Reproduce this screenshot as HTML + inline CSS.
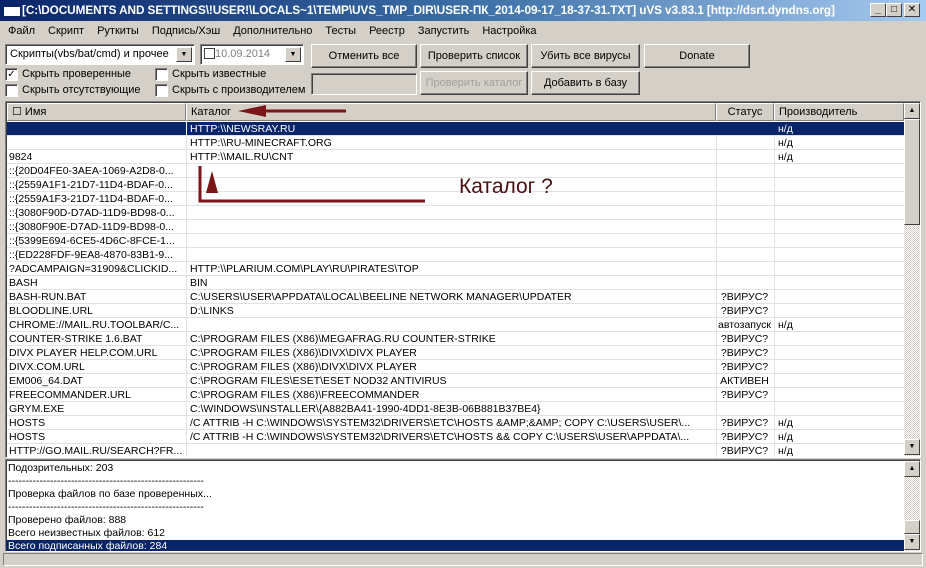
<!DOCTYPE html>
<html><head><meta charset="utf-8">
<style>
*{margin:0;padding:0;box-sizing:border-box}
body{width:926px;height:568px;background:#d4d0c8;font-family:"Liberation Sans","DejaVu Sans",sans-serif;font-size:11px;color:#000;position:relative;overflow:hidden}
.a{position:absolute}
.title{left:0;top:0;width:926px;height:21px;background:linear-gradient(90deg,#0a246a,#3a6ea5 50%,#a6caf0);color:#fff;font-weight:bold;font-size:11.8px;line-height:21px;padding-left:22px;white-space:nowrap;letter-spacing:-0.1px}
.tb{top:3px;width:16px;height:14px;background:#d4d0c8;border:1px solid;border-color:#fff #404040 #404040 #fff;color:#000;font-size:10px;line-height:12px;text-align:center;font-weight:bold}
.menu span{margin-right:13px}
.btn{height:24px;border:1px solid;border-color:#fff #404040 #404040 #fff;box-shadow:inset -1px -1px #808080;text-align:center;line-height:22px;background:#d4d0c8}
.combo{height:21px;background:#fff;border:1px solid;border-color:#808080 #fff #fff #808080;box-shadow:inset 1px 1px #404040;line-height:19px;padding-left:4px;white-space:nowrap;overflow:hidden}
.dd{position:absolute;right:2px;top:2px;width:16px;height:15px;background:#d4d0c8;border:1px solid;border-color:#fff #404040 #404040 #fff;font-size:7px;line-height:13px;text-align:center}
.cb{width:13px;height:13px;background:#fff;border:1px solid;border-color:#808080 #fff #fff #808080;box-shadow:inset 1px 1px #404040;font-size:10px;line-height:11px;text-align:center}
.list{left:5px;top:101px;width:916px;height:357px;background:#fff;border:1px solid;border-color:#808080 #fff #fff #808080;box-shadow:inset 1px 1px #404040;overflow:hidden}
.hdr{position:absolute;top:1px;height:18px;background:#d4d0c8;border:1px solid;border-color:#fff #808080 #808080 #fff;line-height:16px;padding-left:4px;white-space:nowrap}
.row{position:absolute;left:1px;width:897px;height:14px;border-bottom:1px solid #e2e2e2;line-height:14px;white-space:nowrap;font-size:10.5px}
.row span{position:absolute;top:0;overflow:hidden}
.c1{left:2px;width:176px}.c2{left:183px;width:525px}.c3{left:709px;width:57px;text-align:center}.c4{left:771px}
.vl{position:absolute;top:20px;width:1px;height:337px;background:#e2e2e2}
.sel{background:#0a246a;color:#fff}
.sb{position:absolute;width:16px;background:repeating-conic-gradient(#d4d0c8 0 25%,#fff 0 50%) 0 0/2px 2px}
.sbb{position:absolute;width:16px;height:16px;background:#d4d0c8;border:1px solid;border-color:#fff #404040 #404040 #fff;font-size:7px;line-height:14px;text-align:center}
.log{left:5px;top:459px;width:916px;height:93px;background:#fff;border:1px solid;border-color:#808080 #fff #fff #808080;box-shadow:inset 1px 1px #404040;overflow:hidden;font-size:10.5px}
.log div{height:13px;line-height:13px;padding-left:2px;white-space:nowrap}
</style></head><body>
<div class="a title">[C:\DOCUMENTS AND SETTINGS\!USER!\LOCALS~1\TEMP\UVS_TMP_DIR\USER-ПК_2014-09-17_18-37-31.TXT] uVS v3.83.1 [http://dsrt.dyndns.org]</div>
<div class="a" style="left:4px;top:4px;width:16px;height:12px;background:#fff;border-top:3px solid #0a246a"></div>
<div class="a tb" style="left:870px">_</div>
<div class="a tb" style="left:886px">□</div>
<div class="a tb" style="left:904px">✕</div>
<div class="a menu" style="left:8px;top:25px;white-space:nowrap"><span>Файл</span><span>Скрипт</span><span>Руткиты</span><span>Подпись/Хэш</span><span>Дополнительно</span><span>Тесты</span><span>Реестр</span><span>Запустить</span><span>Настройка</span></div>
<div class="a combo" style="left:5px;top:44px;width:190px">Скрипты(vbs/bat/cmd) и прочее<div class="dd">▼</div></div>
<div class="a combo" style="left:200px;top:44px;width:104px;color:#808080;padding-left:3px"><span style="display:inline-block;width:11px;height:11px;border:1px solid #404040;vertical-align:-2px"></span>10.09.2014<div class="dd" style="color:#000">▼</div></div>
<div class="a btn" style="left:311px;top:44px;width:106px">Отменить все</div>
<div class="a btn" style="left:420px;top:44px;width:108px">Проверить список</div>
<div class="a btn" style="left:531px;top:44px;width:109px">Убить все вирусы</div>
<div class="a btn" style="left:644px;top:44px;width:106px">Donate</div>
<div class="a combo" style="left:311px;top:73px;width:106px;height:22px;background:#d4d0c8"></div>
<div class="a btn" style="left:420px;top:71px;width:108px;color:#a0a0a0">Проверить каталог</div>
<div class="a btn" style="left:531px;top:71px;width:109px">Добавить в базу</div>
<div class="a cb" style="left:5px;top:68px">✓</div><div class="a" style="left:22px;top:68px">Скрыть проверенные</div>
<div class="a cb" style="left:155px;top:68px"></div><div class="a" style="left:172px;top:68px">Скрыть известные</div>
<div class="a cb" style="left:5px;top:84px"></div><div class="a" style="left:22px;top:84px">Скрыть отсутствующие</div>
<div class="a cb" style="left:155px;top:84px"></div><div class="a" style="left:172px;top:84px">Скрыть с производителем</div>
<div class="a list">
<div class="hdr" style="left:1px;width:179px">☐ Имя</div>
<div class="hdr" style="left:180px;width:530px">Каталог</div>
<div class="hdr" style="left:710px;width:58px;text-align:center;padding:0">Статус</div>
<div class="hdr" style="left:768px;width:130px">Производитель</div>
<div class="vl" style="left:180px"></div><div class="vl" style="left:710px"></div><div class="vl" style="left:768px"></div>
<div class="row sel" style="top:20px"><span class="c1"></span><span class="c2" style="border-left:1px solid #fff;padding-left:3px;left:179px">HTTP:\\NEWSRAY.RU</span><span class="c4">н/д</span></div>
<div class="row" style="top:34px"><span class="c2">HTTP:\\RU-MINECRAFT.ORG</span><span class="c4">н/д</span></div>
<div class="row" style="top:48px"><span class="c1">9824</span><span class="c2">HTTP:\\MAIL.RU\CNT</span><span class="c4">н/д</span></div>
<div class="row" style="top:62px"><span class="c1">::{20D04FE0-3AEA-1069-A2D8-0...</span></div>
<div class="row" style="top:76px"><span class="c1">::{2559A1F1-21D7-11D4-BDAF-0...</span></div>
<div class="row" style="top:90px"><span class="c1">::{2559A1F3-21D7-11D4-BDAF-0...</span></div>
<div class="row" style="top:104px"><span class="c1">::{3080F90D-D7AD-11D9-BD98-0...</span></div>
<div class="row" style="top:118px"><span class="c1">::{3080F90E-D7AD-11D9-BD98-0...</span></div>
<div class="row" style="top:132px"><span class="c1">::{5399E694-6CE5-4D6C-8FCE-1...</span></div>
<div class="row" style="top:146px"><span class="c1">::{ED228FDF-9EA8-4870-83B1-9...</span></div>
<div class="row" style="top:160px"><span class="c1">?ADCAMPAIGN=31909&amp;CLICKID...</span><span class="c2">HTTP:\\PLARIUM.COM\PLAY\RU\PIRATES\TOP</span></div>
<div class="row" style="top:174px"><span class="c1">BASH</span><span class="c2">BIN</span></div>
<div class="row" style="top:188px"><span class="c1">BASH-RUN.BAT</span><span class="c2">C:\USERS\USER\APPDATA\LOCAL\BEELINE NETWORK MANAGER\UPDATER</span><span class="c3">?ВИРУС?</span></div>
<div class="row" style="top:202px"><span class="c1">BLOODLINE.URL</span><span class="c2">D:\LINKS</span><span class="c3">?ВИРУС?</span></div>
<div class="row" style="top:216px"><span class="c1">CHROME://MAIL.RU.TOOLBAR/C...</span><span class="c3">автозапуск</span><span class="c4">н/д</span></div>
<div class="row" style="top:230px"><span class="c1">COUNTER-STRIKE 1.6.BAT</span><span class="c2">C:\PROGRAM FILES (X86)\MEGAFRAG.RU COUNTER-STRIKE</span><span class="c3">?ВИРУС?</span></div>
<div class="row" style="top:244px"><span class="c1">DIVX PLAYER HELP.COM.URL</span><span class="c2">C:\PROGRAM FILES (X86)\DIVX\DIVX PLAYER</span><span class="c3">?ВИРУС?</span></div>
<div class="row" style="top:258px"><span class="c1">DIVX.COM.URL</span><span class="c2">C:\PROGRAM FILES (X86)\DIVX\DIVX PLAYER</span><span class="c3">?ВИРУС?</span></div>
<div class="row" style="top:272px"><span class="c1">EM006_64.DAT</span><span class="c2">C:\PROGRAM FILES\ESET\ESET NOD32 ANTIVIRUS</span><span class="c3">АКТИВЕН</span></div>
<div class="row" style="top:286px"><span class="c1">FREECOMMANDER.URL</span><span class="c2">C:\PROGRAM FILES (X86)\FREECOMMANDER</span><span class="c3">?ВИРУС?</span></div>
<div class="row" style="top:300px"><span class="c1">GRYM.EXE</span><span class="c2">C:\WINDOWS\INSTALLER\{A882BA41-1990-4DD1-8E3B-06B881B37BE4}</span></div>
<div class="row" style="top:314px"><span class="c1">HOSTS</span><span class="c2">/C ATTRIB -H C:\WINDOWS\SYSTEM32\DRIVERS\ETC\HOSTS &amp;AMP;&amp;AMP; COPY C:\USERS\USER\...</span><span class="c3">?ВИРУС?</span><span class="c4">н/д</span></div>
<div class="row" style="top:328px"><span class="c1">HOSTS</span><span class="c2">/C ATTRIB -H C:\WINDOWS\SYSTEM32\DRIVERS\ETC\HOSTS &amp;&amp; COPY C:\USERS\USER\APPDATA\...</span><span class="c3">?ВИРУС?</span><span class="c4">н/д</span></div>
<div class="row" style="top:342px"><span class="c1">HTTP://GO.MAIL.RU/SEARCH?FR...</span><span class="c3">?ВИРУС?</span><span class="c4">н/д</span></div>
<div class="sb" style="left:898px;top:1px;height:353px"></div>
<div class="sbb" style="left:898px;top:1px">▲</div>
<div class="sbb" style="left:898px;top:17px;height:106px"></div>
<div class="sbb" style="left:898px;top:337px">▼</div>
</div>
<div class="a log">
<div style="margin-top:2px">Подозрительных: 203</div>
<div>--------------------------------------------------------</div>
<div>Проверка файлов по базе проверенных...</div>
<div>--------------------------------------------------------</div>
<div>Проверено файлов: 888</div>
<div>Всего неизвестных файлов: 612</div>
<div class="sel" style="width:898px">Всего подписанных файлов: 284</div>
<div class="sb" style="left:898px;top:1px;height:90px;position:absolute;padding:0"></div>
<div class="sbb" style="left:898px;top:1px;position:absolute;padding:0;height:16px">▲</div>
<div class="sbb" style="left:898px;top:60px;position:absolute;padding:0;height:14px"></div>
<div class="sbb" style="left:898px;top:74px;position:absolute;padding:0;height:16px">▼</div>
</div>
<div class="a" style="left:3px;top:553px;width:920px;height:13px;border:1px solid;border-color:#808080 #fff #fff #808080"></div>
<svg class="a" style="left:0;top:0" width="926" height="568">
<g fill="#7a1518" stroke="#7a1518">
<line x1="262" y1="111" x2="346" y2="111" stroke-width="3"/>
<polygon points="238,111 266,105 266,117" stroke="none"/>
<polyline points="200,166 200,201 425,201" fill="none" stroke-width="3"/>
<polygon points="212,171 206,193 218,193" stroke="none"/>
</g>
<text x="459" y="193" font-family="Liberation Sans,sans-serif" font-size="21" fill="#4a0e10">Каталог ?</text>
</svg>
</body></html>
